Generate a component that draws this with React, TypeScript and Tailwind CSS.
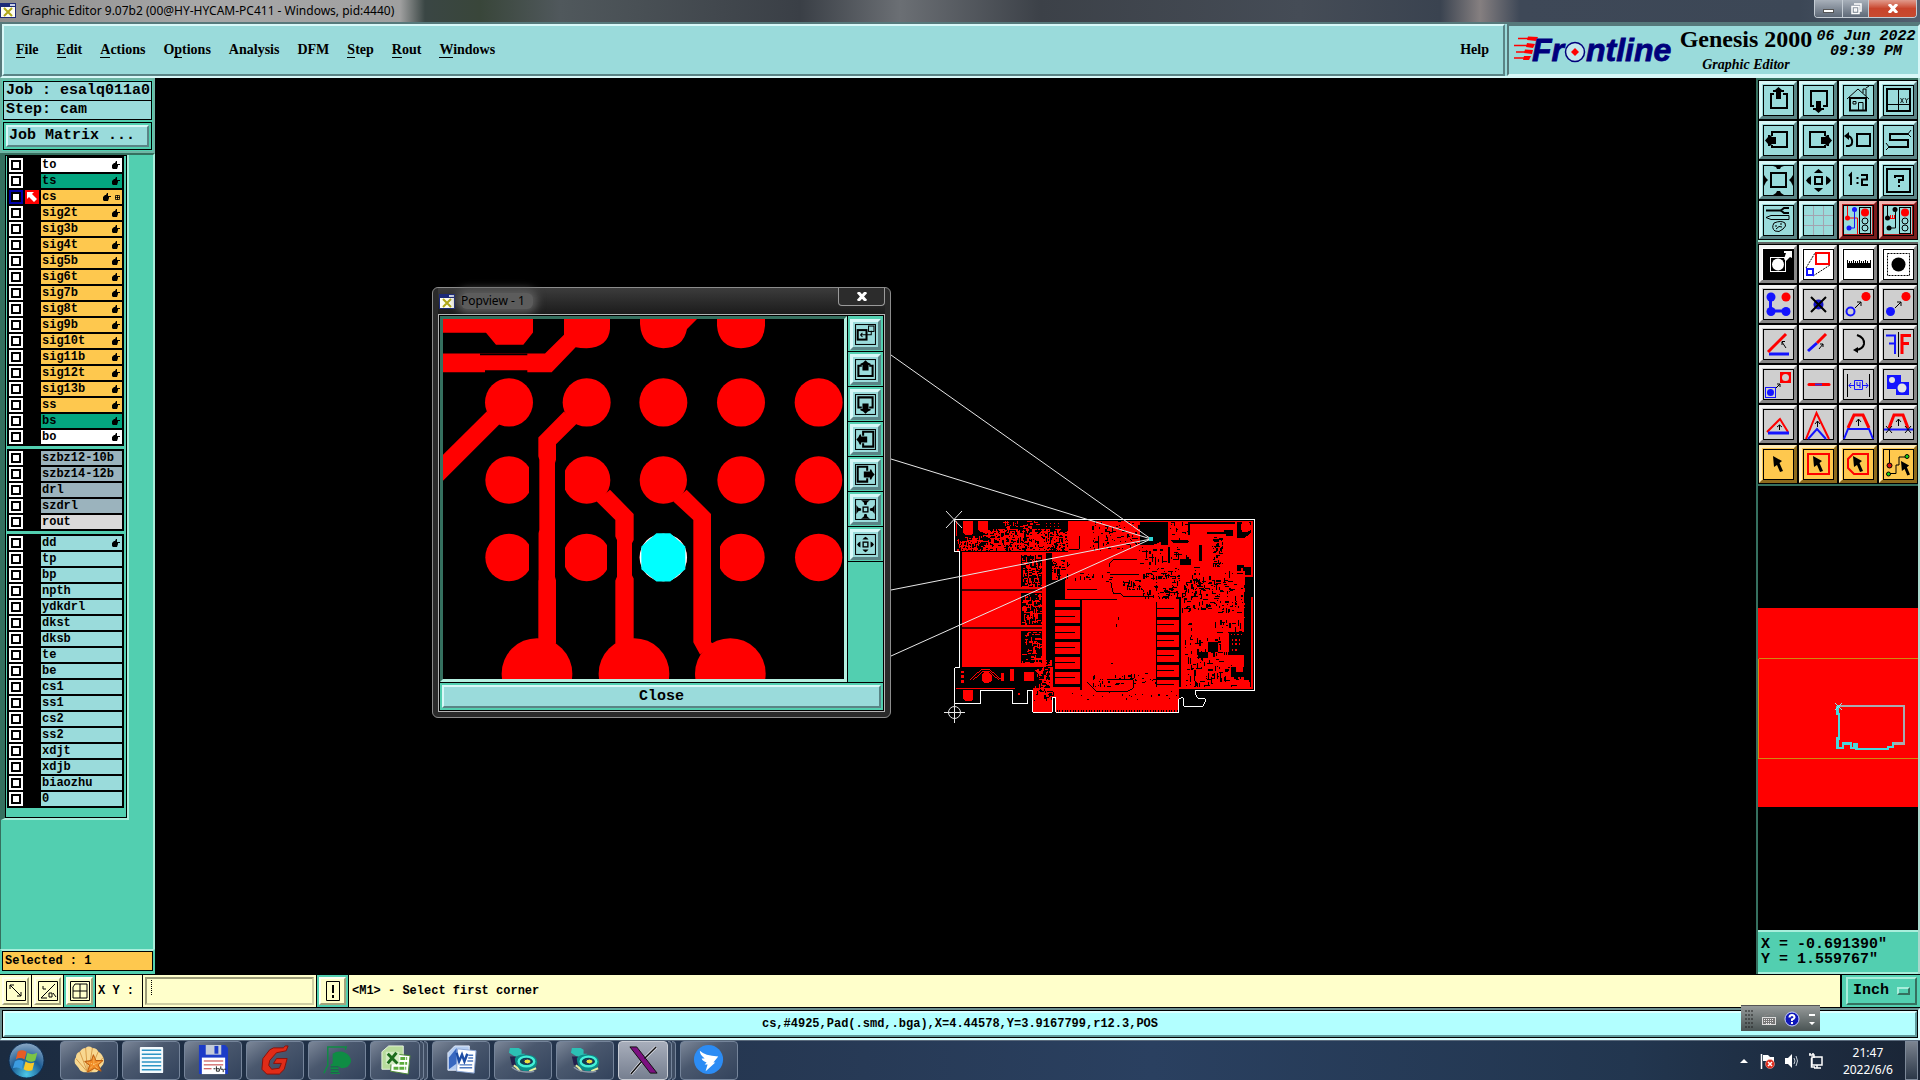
import type { ReactNode } from 'react';
import clsx from 'clsx';

type Layer = { name: string; color: string; hand?: boolean; active?: boolean };

const ORANGE = 'bg-[#fec84e]';
const GREEN = 'bg-[#04a680]';
const STEEL = 'bg-[#9bb3bd]';
const TEAL = 'bg-[#9adbdb]';

const boardLayers: Layer[] = [
  { name: 'to', color: 'bg-white', hand: true },
  { name: 'ts', color: GREEN, hand: true },
  { name: 'cs', color: ORANGE, hand: true, active: true },
  { name: 'sig2t', color: ORANGE, hand: true },
  { name: 'sig3b', color: ORANGE, hand: true },
  { name: 'sig4t', color: ORANGE, hand: true },
  { name: 'sig5b', color: ORANGE, hand: true },
  { name: 'sig6t', color: ORANGE, hand: true },
  { name: 'sig7b', color: ORANGE, hand: true },
  { name: 'sig8t', color: ORANGE, hand: true },
  { name: 'sig9b', color: ORANGE, hand: true },
  { name: 'sig10t', color: ORANGE, hand: true },
  { name: 'sig11b', color: ORANGE, hand: true },
  { name: 'sig12t', color: ORANGE, hand: true },
  { name: 'sig13b', color: ORANGE, hand: true },
  { name: 'ss', color: ORANGE, hand: true },
  { name: 'bs', color: GREEN, hand: true },
  { name: 'bo', color: 'bg-white', hand: true },
];

const drillLayers: Layer[] = [
  { name: 'szbz12-10b', color: STEEL },
  { name: 'szbz14-12b', color: STEEL },
  { name: 'drl', color: STEEL },
  { name: 'szdrl', color: STEEL },
  { name: 'rout', color: 'bg-[#dadada]' },
];

const miscLayers: Layer[] = [
  { name: 'dd', color: TEAL, hand: true },
  ...['tp', 'bp', 'npth', 'ydkdrl', 'dkst', 'dksb', 'te', 'be', 'cs1', 'ss1', 'cs2', 'ss2', 'xdjt', 'xdjb', 'biaozhu', '0'].map(
    (name) => ({ name, color: TEAL }),
  ),
];

const menus: [string, string, string][] = [
  ['', 'F', 'ile'],
  ['', 'E', 'dit'],
  ['', 'A', 'ctions'],
  ['O', 'p', 'tions'],
  ['Analysis', '', ''],
  ['DFM', '', ''],
  ['', 'S', 'tep'],
  ['', 'R', 'out'],
  ['', 'W', 'indows'],
];

const RED = '#ff0000';
const BLUE = '#1414ff';

const mono = "font-['Liberation_Mono',monospace] font-bold";
const serif = "font-['Liberation_Serif',serif] font-bold";

const tealBevel =
  'border-t-[#d8f8f8] border-l-[#d8f8f8] border-b-[#5a8486] border-r-[#5a8486] bg-[#9adbdb]';
const grayBevel =
  'border-t-[#f4f4f4] border-l-[#f4f4f4] border-b-[#878787] border-r-[#878787] bg-[#cfcfcf]';
const whiteBevel =
  'border-t-[#f4f4f4] border-l-[#f4f4f4] border-b-[#878787] border-r-[#878787] bg-white';
const redBevel =
  'border-t-[#f2b4b0] border-l-[#f2b4b0] border-b-[#7c1d1d] border-r-[#7c1d1d] bg-[#9adbdb] ring-2 ring-inset ring-[#b42020]';
const orangeBevel =
  'border-t-[#ffecb8] border-l-[#ffecb8] border-b-[#8d6a1c] border-r-[#8d6a1c] bg-[#fec84e]';
const creamBevel =
  'border-t-[#fffff0] border-l-[#fffff0] border-b-[#a3a37c] border-r-[#a3a37c] bg-[#ffffcb]';

/* ---------- tool icons, drawn on a 31 x 31 grid ---------- */

const arrowUp = 'M15.5 2 L19 5 H21 V7 H18 V14 H13 V7 H10 V5 H12 Z';
const arrowDown = 'M15.5 28 L19 25 H21 V23 H18 V16 H13 V23 H10 V25 H12 Z';
const arrowLeft = 'M2 15.5 L5 12 V10 H7 L9 12 H13 V19 H9 L7 21 H5 V19 Z';
const arrowRight = 'M29 15.5 L26 12 V10 H24 L22 12 H18 V19 H22 L24 21 H26 V19 Z';

const panUp = (
  <>
    <path d="M11 9 H8 V23 H24 V9 H20" fill="none" stroke="#000" strokeWidth="2" />
    <path d={arrowUp} />
  </>
);
const panDown = (
  <>
    <path d="M11 21 H8 V6 H24 V21 H20" fill="none" stroke="#000" strokeWidth="2" />
    <path d={arrowDown} />
  </>
);
const panLeft = (
  <>
    <path d="M9 11 V7 H24 V22 H9 V20" fill="none" stroke="#000" strokeWidth="2" />
    <path d={arrowLeft} />
  </>
);
const panRight = (
  <>
    <path d="M22 11 V7 H7 V22 H22 V20" fill="none" stroke="#000" strokeWidth="2" />
    <path d={arrowRight} />
  </>
);
const zoomIn = (
  <>
    <rect x="8" y="8" width="15" height="14" fill="none" stroke="#000" strokeWidth="2" />
    <path d="M10 1 H21 L18 2 L17 4 H14 L13 2 Z M10 30 H21 L18 28 L17 26 H14 L13 28 Z M1 10 L3 13 L5 15 L3 17 L1 21 Z M30 10 L28 13 L26 15 L28 17 L30 21 Z" />
  </>
);
const zoomOut = (
  <>
    <rect x="12" y="12" width="7" height="7" fill="none" stroke="#000" strokeWidth="2" />
    <path d="M15.5 4 L18 6 L20 8 H11 L13 6 Z M15.5 27 L18 25 L20 23 H11 L13 25 Z M3 15.5 L5 13 L8 11 V20 L5 18 Z M28 15.5 L26 13 L23 11 V20 L26 18 Z" />
  </>
);
const fitIn = (
  <>
    <rect x="12" y="12" width="7" height="7" fill="none" stroke="#000" strokeWidth="2" />
    <path d="M9 2 H22 L18 5 L17 9 H14 L13 5 Z M9 29 H22 L18 26 L17 22 H14 L13 26 Z M2 9 V22 L5 18 L9 17 V14 L5 13 Z M29 9 V22 L26 18 L22 17 V14 L26 13 Z" />
  </>
);
const lightColumn = (
  <>
    <rect x="16.5" y="2.5" width="11" height="26" fill="#9adbdb" stroke="#000" />
    <circle cx="22" cy="7.500" r="4" fill={RED} />
    <circle cx="22" cy="16" r="3" fill="none" stroke="#000" />
    <circle cx="22" cy="23" r="3" fill="none" stroke="#000" />
  </>
);
const pointer = 'M0 0 L9 5 L6.500 7 L10 15 L7 16 L4 9 L1 11 Z';

type Tool = { name: string; bevel: string; icon: ReactNode };

const viewTools: Tool[] = [
  { name: 'Pan up', bevel: tealBevel, icon: panUp },
  { name: 'Pan down', bevel: tealBevel, icon: panDown },
  {
    name: 'Home',
    bevel: tealBevel,
    icon: (
      <g fill="none" stroke="#000">
        <path d="M4 14 L15 4 L26 14 M20 8 V4 H23 V11 M23 3 L26 1" />
        <path d="M7 13 V25.500 H23 V13 Z" strokeWidth="2" />
        <path d="M10 16.500 H13 V19 H10 Z M15.500 25 V17.500 H20 V25" />
      </g>
    ),
  },
  {
    name: 'Window XY',
    bevel: tealBevel,
    icon: (
      <>
        <rect x="4" y="4" width="23" height="22" fill="none" stroke="#000" strokeWidth="2" />
        <path d="M15.500 4 V26 M4 19.500 H27" fill="none" stroke="#000" />
        <path d="M17.500 13 L20.500 18 M20.500 13 L17.500 18 M22 13 L23.500 15.500 L25.500 13 M23.500 15.500 V18" fill="none" stroke="#000" strokeWidth=".8" />
      </>
    ),
  },
  { name: 'Pan left', bevel: tealBevel, icon: panLeft },
  { name: 'Pan right', bevel: tealBevel, icon: panRight },
  {
    name: 'Previous view',
    bevel: tealBevel,
    icon: (
      <>
        <rect x="14" y="9" width="13" height="12" fill="none" stroke="#000" strokeWidth="2" />
        <path d="M3 21 H6 Q10 20 9 15 Q8 11 4 11" fill="none" stroke="#000" strokeWidth="2" />
        <path d="M1 11 L6 7 V15 Z" />
      </>
    ),
  },
  {
    name: 'Serpentine',
    bevel: tealBevel,
    icon: (
      <g fill="none" stroke="#000">
        <path d="M25 9 H7 V15 H25 V22 H6" strokeWidth="2" />
        <path d="M25 9 L28 5 M25 9 L28 12 M6 22 L3 18 M6 22 L3 25" />
      </g>
    ),
  },
  { name: 'Zoom in', bevel: tealBevel, icon: zoomIn },
  { name: 'Zoom out', bevel: tealBevel, icon: zoomOut },
  {
    name: 'Zoom 1:2',
    bevel: tealBevel,
    icon: (
      <path
        d="M6 11 L8 9 V20 M14.500 12 V14 M14.500 17 V19 M18 10 H24 V14.500 H19 V20 H25"
        fill="none"
        stroke="#000"
        strokeWidth="2"
      />
    ),
  },
  {
    name: 'Query',
    bevel: tealBevel,
    icon: (
      <g fill="none" stroke="#000" strokeWidth="2">
        <rect x="4" y="4" width="23" height="23" />
        <path d="M12 13 V11 H20 V15 H16 V18 M16 20 V22" />
      </g>
    ),
  },
  {
    name: 'Setup',
    bevel: tealBevel,
    icon: (
      <g fill="none" stroke="#000">
        <path d="M3 5.500 H19" strokeWidth="2" />
        <path d="M26 3 H21 L18 5.500 L21 8 H26" strokeWidth="2" />
        <path d="M3 12.500 L8 10.500 H26 V14.500 H8 Z" />
        <path d="M11 18 Q18 15 22 18 Q24 21 20 24 Q16 28 12 26 Q8 23 11 18 M12 21 H14 M17 19 H19 M13 24 Q16 20 19 22" />
      </g>
    ),
  },
  {
    name: 'Grid',
    bevel: tealBevel,
    icon: <path d="M10.500 1 V30 M20.500 1 V30 M1 10.500 H30 M1 20.500 H30" fill="none" stroke="#a3a3b0" />,
  },
  {
    name: 'Online check',
    bevel: redBevel,
    icon: (
      <>
        <path d="M4.500 1 V13 M4.500 13 H14.500 V29" fill="none" stroke={RED} />
        <path d="M11.500 5 V23 H6" fill="none" stroke={BLUE} />
        <circle cx="11.500" cy="4.500" r="2.500" fill={BLUE} />
        <circle cx="6" cy="23" r="2.500" fill={BLUE} />
        <circle cx="4.500" cy="13" r="2.500" fill={RED} />
        {lightColumn}
      </>
    ),
  },
  {
    name: 'Net check',
    bevel: redBevel,
    icon: (
      <>
        <path d="M4.500 1 V13 M12.500 5 V23 H6" fill="none" stroke="#000" />
        <circle cx="12" cy="4.500" r="2.500" />
        <circle cx="6" cy="23" r="2.500" />
        <circle cx="4.500" cy="13" r="2.500" />
        <path d="M7 13.500 H12 M7.500 10 V13 M9.500 10 V13 M11.500 10 V13" fill="none" stroke={RED} />
        {lightColumn}
      </>
    ),
  },
];

const editTools: Tool[] = [
  {
    name: 'Select feature',
    bevel: whiteBevel,
    icon: (
      <>
        <rect x="1" y="1" width="29" height="29" />
        <rect x="7.500" y="8.500" width="15" height="14" fill="none" stroke="#fff" />
        <circle cx="15" cy="15.500" r="6" fill="#fff" />
        <path d="M21 10 L23 4 H21 V2 H29 V9 L27 8 L23 12 Z" fill="#fff" />
      </>
    ),
  },
  {
    name: 'Area zoom',
    bevel: whiteBevel,
    icon: (
      <>
        <path d="M3 19 L12 4 M10 27 L27 16" fill="none" stroke="#000" strokeDasharray="2 1" />
        <rect x="13" y="4" width="13" height="11" fill="none" stroke={RED} strokeWidth="2" />
        <rect x="4" y="20" width="6" height="6" fill="none" stroke={BLUE} strokeWidth="2" />
      </>
    ),
  },
  {
    name: 'Measure',
    bevel: whiteBevel,
    icon: (
      <path d="M4 11 H5 V14 H6 V12 H7 V14 H8 V12 H9 V14 H10 V11 H11 V14 H12 V12 H13 V14 H14 V12 H15 V14 H16 V11 H17 V14 H18 V12 H19 V14 H20 V12 H21 V14 H22 V11 H23 V14 H24 V12 H25 V14 H27 V11 H28 V19 H4 Z" />
    ),
  },
  {
    name: 'Reference',
    bevel: whiteBevel,
    icon: (
      <>
        <rect x="4.500" y="4.500" width="22" height="22" fill="none" stroke="#000" strokeDasharray="2 1" />
        <circle cx="15.500" cy="15.500" r="7" />
      </>
    ),
  },
  {
    name: 'Add feature',
    bevel: grayBevel,
    icon: (
      <>
        <path d="M7.500 8 V22 H22" fill="none" stroke={BLUE} strokeWidth="3" />
        <circle cx="8" cy="8" r="4.500" fill={BLUE} />
        <circle cx="8" cy="22.500" r="4.500" fill={BLUE} />
        <circle cx="23" cy="22.500" r="4.500" fill={BLUE} />
        <circle cx="23" cy="8" r="4.500" fill={RED} />
      </>
    ),
  },
  {
    name: 'Delete',
    bevel: grayBevel,
    icon: (
      <>
        <circle cx="15.500" cy="15.500" r="5" fill="#1414c8" />
        <path d="M8 8 L23 23 M23 8 L8 23" fill="none" stroke="#000" strokeWidth="2" />
      </>
    ),
  },
  {
    name: 'Move',
    bevel: grayBevel,
    icon: (
      <>
        <circle cx="7.500" cy="22.500" r="4" fill="none" stroke={BLUE} strokeWidth="2" />
        <circle cx="23" cy="7.500" r="4.500" fill={RED} />
        <path d="M12 19 L18 13 M14 13 H18 V17" fill="none" stroke="#000" />
      </>
    ),
  },
  {
    name: 'Copy',
    bevel: grayBevel,
    icon: (
      <>
        <circle cx="7.500" cy="22.500" r="4.500" fill={BLUE} />
        <circle cx="23" cy="7.500" r="4.500" fill={RED} />
        <path d="M12 19 L18 13 M14 13 H18 V17" fill="none" stroke="#000" />
      </>
    ),
  },
  {
    name: 'Rotate line',
    bevel: grayBevel,
    icon: (
      <>
        <path d="M6 25 H26" fill="none" stroke={BLUE} strokeWidth="3" />
        <path d="M5 23 L23 5" fill="none" stroke={RED} strokeWidth="3" />
        <path d="M23 19 L19 13 M19 16 V12.500 H22" fill="none" stroke="#000" />
      </>
    ),
  },
  {
    name: 'Extend line',
    bevel: grayBevel,
    icon: (
      <>
        <path d="M5 22 L14 14" fill="none" stroke={BLUE} strokeWidth="3" />
        <path d="M14 14 L23 5" fill="none" stroke={RED} strokeWidth="3" />
        <path d="M16 20 L20 15 M17 15 H20 V18" fill="none" stroke="#000" />
      </>
    ),
  },
  {
    name: 'Rotate',
    bevel: grayBevel,
    icon: (
      <>
        <path d="M14 6 Q22 9 21 15 Q20 20 13 21" fill="none" stroke="#000" strokeWidth="2" />
        <path d="M10 21 L15 18 V24 Z" />
      </>
    ),
  },
  {
    name: 'Mirror',
    bevel: grayBevel,
    icon: (
      <>
        <path d="M15.500 3 V28" stroke="#000" />
        <path d="M3 6.500 H12 V25 M6 14.500 H12" fill="none" stroke={BLUE} strokeWidth="2" />
        <path d="M28 6.500 H19 V25 M26 14.500 H19" fill="none" stroke={RED} strokeWidth="3" />
      </>
    ),
  },
  {
    name: 'Resize pad',
    bevel: grayBevel,
    icon: (
      <>
        <rect x="2.500" y="18.500" width="10" height="10" fill="none" stroke={BLUE} />
        <circle cx="7.500" cy="23.500" r="3.500" fill={BLUE} />
        <rect x="17" y="3" width="11" height="11" fill={RED} />
        <circle cx="22.500" cy="8.500" r="3.500" fill="#cfcfcf" />
        <path d="M13 19 L17 15 M14 15 H17 V18" fill="none" stroke="#000" />
      </>
    ),
  },
  {
    name: 'Join',
    bevel: grayBevel,
    icon: (
      <>
        <path d="M6 15.500 H26" stroke={RED} strokeWidth="3" strokeLinecap="round" />
        <path d="M12 15.500 H19" stroke="#3232e0" strokeWidth="2" />
      </>
    ),
  },
  {
    name: 'Spacing',
    bevel: grayBevel,
    icon: (
      <>
        <path d="M4.500 5 V28 M26.500 5 V28" stroke="#000" />
        <path
          d="M6 16.500 H11 M8 14 L6 16.500 L8 19 M20 16.500 H25 M23 14 L25 16.500 L23 19 M11.500 11.500 H19.500 V20.500 H11.500 Z M14 13 V16.500 H17 M17 13 V19"
          fill="none"
          stroke={BLUE}
        />
      </>
    ),
  },
  {
    name: 'Merge',
    bevel: grayBevel,
    icon: (
      <>
        <path d="M4 6 H18 V13 H26 V26 H13 V20 H4 Z" fill={BLUE} />
        <circle cx="9" cy="11" r="3" fill="#e4e4e4" />
        <circle cx="19" cy="19" r="4.500" fill="#e4e4e4" />
      </>
    ),
  },
  {
    name: 'Chamfer',
    bevel: grayBevel,
    icon: (
      <>
        <path d="M4 23 L17 10 L25 23" fill="none" stroke={RED} strokeWidth="2" />
        <path d="M5 24 H26" stroke={BLUE} strokeWidth="3" />
        <path d="M16.500 21 V16 M14 18 L16.500 16 L19 18" fill="none" stroke="#000" />
      </>
    ),
  },
  {
    name: 'Stretch',
    bevel: grayBevel,
    icon: (
      <>
        <path d="M3 30 L13.500 4 L26 30" fill="none" stroke={RED} strokeWidth="2" />
        <path d="M5 30 L14 20 L23 30" fill="none" stroke={BLUE} strokeWidth="2" />
        <path d="M14.500 18 V12 M12 15 L14.500 12 L17 15" fill="none" stroke="#000" />
      </>
    ),
  },
  {
    name: 'Trapezoid',
    bevel: grayBevel,
    icon: (
      <>
        <path d="M5 19 L11 6 H20 L26 19" fill="none" stroke={RED} strokeWidth="3" />
        <path d="M1 30 L5 20 H26 L30 30" fill="none" stroke={BLUE} strokeWidth="2" />
        <path d="M15.500 17 V10 M13 13 L15.500 10 L18 13" fill="none" stroke="#000" />
      </>
    ),
  },
  {
    name: 'Trim',
    bevel: grayBevel,
    icon: (
      <>
        <path d="M6 19 L11 6 H20 L25 19" fill="none" stroke={RED} strokeWidth="3" />
        <path d="M1 20.500 H30" stroke={BLUE} strokeWidth="2" />
        <path d="M15.500 17 V10 M13 13 L15.500 10 L18 13 M3 17 L9 24 M9 17 L3 24 M22 17 L28 24 M28 17 L22 24" fill="none" stroke="#000" />
      </>
    ),
  },
  { name: 'Select', bevel: orangeBevel, icon: <path d={pointer} transform="translate(10 7)" /> },
  {
    name: 'Select rectangle',
    bevel: orangeBevel,
    icon: (
      <>
        <rect x="5" y="5" width="21" height="20" fill="none" stroke={RED} strokeWidth="2" />
        <path d={pointer} transform="translate(10 7)" />
      </>
    ),
  },
  {
    name: 'Select polygon',
    bevel: orangeBevel,
    icon: (
      <>
        <path d="M10 5 H25 V25 H11 L5 19 V10 Z" fill="none" stroke={RED} strokeWidth="2" />
        <path d={pointer} transform="translate(10 7)" />
      </>
    ),
  },
  {
    name: 'Select net',
    bevel: orangeBevel,
    icon: (
      <>
        <path d="M6.500 1 V16 M5 24.500 H13 V16 H16 V8 H24" fill="none" stroke="#000" />
        <circle cx="6.500" cy="16.500" r="2.500" fill="#d01010" stroke="#000" />
        <circle cx="5.500" cy="25" r="2" fill="#18d018" stroke="#000" />
        <circle cx="24" cy="7.500" r="2" fill="#18d018" stroke="#000" />
        <path d={pointer} transform="translate(18 12) scale(.9)" />
      </>
    ),
  },
];

const popTools: { name: string; icon: ReactNode }[] = [
  {
    name: 'Link view',
    icon: (
      <>
        <rect x="4" y="9" width="13" height="14" fill="none" stroke="#000" strokeWidth="3" />
        <rect x="20" y="3" width="8" height="8" fill="none" stroke="#000" strokeWidth="1.500" />
        <path d="M8 16 H24 V10 M8 16 L11 13 M8 16 L11 19" fill="none" stroke="#000" strokeWidth="1.500" />
      </>
    ),
  },
  {
    name: 'Pan up',
    icon: (
      <>
        <path d="M10 10 H5 V25 H26 V10 H21" fill="none" stroke="#000" strokeWidth="3" />
        <path d="M15.500 2 L19 5 L23 7 V9 H20 V17 H11 V9 H8 V7 L12 5 Z" />
      </>
    ),
  },
  {
    name: 'Pan down',
    icon: (
      <>
        <path d="M10 20 H5 V5 H26 V20 H21" fill="none" stroke="#000" strokeWidth="3" />
        <path d="M15.500 29 L19 26 L23 24 V22 H20 V14 H11 V22 H8 V24 L12 26 Z" />
      </>
    ),
  },
  {
    name: 'Pan left',
    icon: (
      <>
        <path d="M12 10 V4 H27 V26 H12 V21" fill="none" stroke="#000" strokeWidth="3" />
        <path d="M2 15.500 L5 12 L7 8 H9 V11 H18 V20 H9 V23 H7 L5 19 Z" />
      </>
    ),
  },
  {
    name: 'Pan right',
    icon: (
      <>
        <path d="M18 10 V4 H4 V26 H18 V21" fill="none" stroke="#000" strokeWidth="3" />
        <path d="M29 15.500 L26 12 L24 8 H22 V11 H13 V20 H22 V23 H24 L26 19 Z" />
      </>
    ),
  },
  { name: 'Fit', icon: fitIn },
  { name: 'Zoom out', icon: zoomOut },
];

function ToolButton({ tool }: { tool: Tool }) {
  return (
    <button
      type="button"
      aria-label={tool.name}
      className={clsx('flex size-[38px] items-center justify-center border-[3px]', tool.bevel)}
    >
      <svg viewBox="0 0 31 31" className="size-[31px]">
        <rect x=".5" y=".5" width="30" height="30" fill="none" stroke="#000" />
        {tool.icon}
      </svg>
    </button>
  );
}

function ToolGrid({ tools, className }: { tools: Tool[]; className?: string }) {
  return (
    <div className={clsx('border-t-2 bg-black p-px', className)}>
      <div className="grid grid-cols-[repeat(4,38px)] gap-[2px]">
        {tools.map((tool) => (
          <ToolButton key={tool.name} tool={tool} />
        ))}
      </div>
    </div>
  );
}

function HandIcon() {
  return (
    <svg viewBox="0 0 8 8" className="size-2">
      <path d="M0 4 L2 2 L3 2 L4 0 H5 V3 H8 V4 H6 V5 L5 8 H1 L0 7 Z" />
    </svg>
  );
}

function XWindowIcon() {
  return (
    <svg viewBox="0 0 16 15" className="h-[15px] w-4 shrink-0">
      <rect width="16" height="15" fill="#1c2a78" />
      <rect x="10" y="1" width="5" height="2" fill="#c8d0e8" />
      <rect x="1" y="4" width="14" height="10" fill="#fdfdf0" />
      <path d="M4 5 L12 13 M12 5 L4 13" stroke="#b0a818" strokeWidth="2" />
    </svg>
  );
}

function LayerRow({ layer }: { layer: Layer }) {
  return (
    <label className="flex h-[14px]">
      <span className={clsx('flex size-[14px] p-[2px]', layer.active ? 'bg-[#0000a8]' : 'bg-white')}>
        <input
          type="checkbox"
          defaultChecked={layer.active}
          className="size-[10px] appearance-none border-2 border-black bg-white"
        />
      </span>
      <span className="flex w-[18px] justify-end pr-[2px]">
        {layer.active && (
          <svg viewBox="0 0 14 14" className="size-[14px]">
            <rect width="14" height="14" fill={RED} />
            <path d="M2 2 H9 L7 4 L12 9 L9 12 L4 7 L2 9 Z" fill="#fff" />
          </svg>
        )}
      </span>
      <span className={clsx('flex flex-1 items-center gap-1 pr-[2px] pl-px', layer.color)}>
        <span className={clsx(mono, 'flex-1 text-[12px] leading-[14px]')}>{layer.name}</span>
        {layer.hand && <HandIcon />}
        {layer.active && (
          <svg viewBox="0 0 5 5" className="size-[5px]">
            <path d="M.5 .5 H4.500 V4.500 H.5 Z M2.500 0 V5 M0 2.500 H5" fill="none" stroke="#000" strokeWidth=".8" />
          </svg>
        )}
      </span>
    </label>
  );
}

function LayerGroup({ layers }: { layers: Layer[] }) {
  return (
    <div className="flex flex-col gap-[2px] bg-black p-[2px]">
      {layers.map((layer) => (
        <LayerRow key={layer.name} layer={layer} />
      ))}
    </div>
  );
}

function LayerSidebar() {
  return (
    <aside className="flex w-[155px] shrink-0 flex-col bg-[#52cfb0] pb-px">
      <div className="border-2 border-[#6fb5a4] p-px">
        <div className={clsx(mono, 'border border-black bg-[#9adbdb] pl-[2px] text-[15px] leading-[18px] whitespace-nowrap')}>
          Job : esalq011a0
        </div>
        <div className={clsx(mono, 'border border-t-0 border-black bg-[#9adbdb] pl-[2px] text-[15px] leading-[18px]')}>
          Step: cam
        </div>
        <div className="mt-[2px] border border-black p-[2px]">
          <button type="button" className={clsx(mono, tealBevel, 'block w-full border-2 pl-px text-left text-[15px] leading-[18px]')}>
            Job Matrix ...
          </button>
        </div>
      </div>
      <div className="flex-1 border-t-2 border-r-2 border-l border-t-[#35705f] border-r-[#a8eedb] border-l-[#35705f] pr-6">
        <div className="border-r-2 border-b-2 border-l-4 border-r-[#a8eedb] border-b-[#a8eedb] border-l-[#35705f]">
          <div className="flex flex-col gap-[3px] border border-black pr-[2px] pb-[9px] pl-px">
            <LayerGroup layers={boardLayers} />
            <LayerGroup layers={drillLayers} />
            <LayerGroup layers={miscLayers} />
          </div>
        </div>
      </div>
      <div className="border-2 border-t-[#a8eedb] border-r-[#52cfb0] border-b-[#52cfb0] border-l-[#52cfb0]">
        <div className={clsx(mono, 'border border-black bg-[#fec84e] pl-[2px] text-[12px] leading-[18px]')}>
          Selected : 1
        </div>
      </div>
    </aside>
  );
}

/* ---------- board drawing ---------- */

// fixed-seed scatter, so that the copper looks the same on every paint
function scatter(x: number, y: number, w: number, h: number, count: number, max: number, seed: number) {
  let s = seed;
  const next = () => {
    s = (s * 1103515245 + 12345) % 2147483648;
    return s / 2147483648;
  };
  let d = '';
  for (let i = 0; i < count; i++) {
    const px = x + Math.floor((next() * w) / 3) * 3;
    const py = y + Math.floor((next() * h) / 3) * 3;
    const long = 3 + Math.floor((next() * max) / 3) * 3;
    const flat = next() > 0.5;
    const thick = next() > 0.85 ? 6 : 3;
    const cw = Math.min(flat ? long : thick, x + w - px);
    const ch = Math.min(flat ? thick : long, y + h - py);
    d += `M${px} ${py}h${cw}v${ch}h${-cw}z`;
  }
  return d;
}

const outline =
  'M44 58 H944 V571 H768 V585 L775 597 H796 V605 L788 619 H732 V600 L727 592 L716 597 V637 H347 V592 H337 V637 H279 V573 H262 V612 H218 V571 H122 V612 H44 V503 H59 V155 H44 Z';

const slots = [322, 348, 370, 395, 417, 440, 462, 485, 507, 530, 551];

function Board() {
  return (
    <g transform="translate(785 422) scale(.33333)" shapeRendering="crispEdges">
      <path d="M65 62 H940 V568 H716 V637 H347 V592 H337 V637 H279 V568 H48 V500 H65 Z" fill={RED} />

      {/* connector strip, top left */}
      <path d="M50 64 H385 V155 H50 Z" />
      <path d="M70 64 h30 v34 l-6 8 h-18 l-6 -6z M115 64 h28 v26 l-6 6 h-16 l-6 -6z M48 64 h4 v45 h-4z" fill={RED} />
      <path d={scatter(190, 64, 110, 24, 30, 15, 6)} fill={RED} />
      <path d={scatter(130, 88, 255, 66, 520, 18, 7)} fill={RED} />
      <path d={scatter(50, 108, 80, 45, 75, 15, 11)} fill={RED} />
      <path d="M316 64 h68 v22 h-68z" />
      <path d="M318 68 h4v4h-4z M330 68 h4v4h-4z M342 68 h4v4h-4z M354 68 h4v4h-4z M318 78 h4v4h-4z M330 78 h4v4h-4z M342 78 h4v4h-4z M354 78 h4v4h-4z" fill={RED} />

      {/* driver columns between planes */}
      <path d="M244 165 H306 V262 H244 Z M244 280 H306 V376 H244 Z M244 394 H306 V490 H244 Z M318 160 H336 V500 H318 Z M336 240 H376 V300 H345 V500 H330 Z" />
      <path d={scatter(246, 166, 62, 94, 90, 18, 3)} fill={RED} />
      <path d={scatter(246, 282, 62, 92, 90, 18, 5)} fill={RED} />
      <path d={scatter(246, 396, 62, 92, 90, 18, 9)} fill={RED} />
      <path d={scatter(320, 165, 70, 90, 45, 15, 13)} />
      <path d="M66 267 H306 V272 H66 Z M66 381 H306 V386 H66 Z" fill="#4a0000" />

      {/* bottom left */}
      <path d="M48 500 H330 V563 H48 Z M225 563 H279 V571 H225 Z" />
      <path d="M90 540 L122 510 H150 L185 540 M100 540 L128 514 H148 L176 540" fill="none" stroke={RED} strokeWidth="3" />
      <path d="M132 517 h14 l10 8 v16 l-10 8 h-12 l-9 -8 v-16z M182 520 h10 v24 h-10z M210 506 h12 v38 h-12z M252 516 h30 v26 h-30z M64 512 h8v8h-8z M64 526 h8v8h-8z M64 540 h8v8h-8z M68 570 h32 v28 l-8 6 h-14 l-10 -8z M234 578 h7 v7 h-7z" fill={RED} />
      <path d={scatter(285, 480, 60, 90, 80, 15, 17)} fill={RED} />
      <path d={scatter(282, 566, 60, 36, 22, 12, 19)} />

      {/* centre top traces */}
      <path d="M388 148 H418 V108 M476 108 V150 M508 200 V190 L518 180 H592 M510 225 H596 M512 245 L520 280 H540 L550 290 H640 M380 270 H470 M376 300 H530" fill="none" stroke="#000" strokeWidth="3" />
      <path d={scatter(450, 64, 150, 90, 75, 12, 23)} />
      <path d={scatter(390, 215, 130, 30, 16, 12, 29)} />
      <path d={scatter(550, 240, 60, 30, 30, 18, 31)} />

      {/* finger slots around the big package */}
      <path d="M330 300 H346 V480 H330 Z M338 300 H346 V560 H338 Z M420 300 H425 V570 H420 Z M648 305 H652 V560 H648 Z M716 290 H722 V560 H716 Z" />
      {slots.map((y, i) => (
        <path key={y} d={`M345 ${y}h${i % 2 ? 60 : 76}v${i % 2 ? 3 : 9}h${i % 2 ? -60 : -76}z M652 ${y + 2}h${i % 2 ? 66 : 50}v${i % 2 ? 9 : 3}h${i % 2 ? -66 : -50}z`} />
      ))}
      <path d="M534 352 h4 v8 h-4z M528 372 h4 v10 h-4z M514 488 h6 v4 h-6z" />
      <path d="M440 545 L470 575 H560 L580 565 V540 H500" fill="none" stroke="#000" strokeWidth="3" />
      <path d={scatter(460, 520, 190, 40, 40, 12, 37)} />

      {/* right half */}
      <path d="M600 66 H684 V80 H664 V125 L640 135 H600 Z M664 80 H684 V136 H664 Z M690 120 H744 V130 H700 Z M750 66 H885 V72 H750 Z M800 96 H875 V102 H800 Z M850 90 H880 V108 H860 Z M745 66 h4 v40 h-4z M888 66 H932 V100 L912 115 V200 L890 205 V66 Z M890 200 H932 V226 H912 V250 H890 Z M915 230 H940 V290 H932 V560 H912 V260 Z M776 136 h10 v46 h-10z M684 140 h5 v50 h-5z M720 176 h34 v18 h-34z" />
      <path d="M905 66 H926 L932 76 V90 L922 96 H908 L903 88 Z" fill={RED} />
      <path d={scatter(600, 140, 150, 56, 34, 24, 41)} />
      <path d={scatter(610, 204, 110, 94, 120, 15, 42)} />
      <path d={scatter(750, 200, 130, 70, 45, 18, 43)} />
      <path d={scatter(725, 240, 185, 100, 120, 15, 47)} />
      <path d={scatter(735, 360, 170, 200, 170, 18, 53)} />
      <path d={scatter(690, 66, 60, 60, 18, 15, 59)} />
      <path d={scatter(815, 110, 36, 90, 75, 9, 61)} />
      <path d="M865 396 h48 v70 h-48z M805 425 h28 v30 h-28z M775 455 h30 v20 h-30z M872 500 h40 v30 h-40z" />
      <path d="M872 402 h4v4h-4z M882 402 h4v4h-4z M892 402 h4v4h-4z M902 402 h4v4h-4z M876 416 h4v6h-4z M886 416 h4v6h-4z M896 416 h4v6h-4z M876 430 h4v6h-4z M886 430 h4v6h-4z M896 430 h4v6h-4z M876 446 h4v6h-4z M886 446 h4v6h-4z" fill={RED} />
      <path d={scatter(880, 205, 34, 150, 60, 15, 71)} fill={RED} />
      <path d="M755 345 h70 v70 h-70z M610 236 h24 l6 8 v18 l-6 8 h-24 l-6 -8 v-18z M655 236 h42 v28 h-42z M850 115 h62 v80 h-62z M842 400 h26 v55 h-26z M905 540 h20 l6 8 v16 h-30 v-16z M820 200 h24 l6 8 v18 l-6 8 h-24 l-6 -8 v-18z M888 482 h22 v34 h-22z M890 222 h24 v34 h-24z" fill={RED} />
      <path d={scatter(395, 572, 320, 32, 22, 6, 73)} />
      <path d="M350 633 H714" stroke="#000" strokeWidth="6" strokeDasharray="3 5" />

      <path d={outline} fill="none" stroke="#fff" strokeWidth="3" />
    </g>
  );
}

function Canvas() {
  return (
    <svg className="absolute inset-0 h-full w-full" aria-label="Board view">
      <Board />
      <g fill="none" stroke="#e8e8e8">
        <path d="M736 277 L996 461 L736 381 M736 512 L996 461 L736 578" />
        <path d="M791 433 L807 450 M807 433 L791 450" />
        <circle cx="799.500" cy="634.500" r="6" />
        <path d="M799.500 624 V645 M789 634.500 H810" />
      </g>
      <path d="M994 459 h4 v4 h-4z" fill="#30d8d8" />
    </svg>
  );
}

const padColumns = [237, 470, 700, 933, 1166];

function CopperDetail() {
  return (
    <svg viewBox="39 120 1203 1075" preserveAspectRatio="none" className="h-full w-full bg-black">
      <g fill={RED}>
        <path d="M39 120 H309 V160 L280 197 H198 L168 161 H39 Z" />
        <path d="M39 223 H345 L402 167 V120 H540 V150 Q535 205 470 207 Q450 207 437 204 L365 279 H292 V273 H165 V279 H39 Z" />
        <path d="M292 223 V228 H150 V223 Z" fill="#000" />
        <path d="M630 120 H801 L771 150 Q760 207 700 207 Q635 205 630 135 Z M861 120 H1005 V140 Q1000 207 933 207 Q866 205 861 140 Z" />
        {padColumns.map((x) => (
          <g key={x}>
            <circle cx={x} cy="369" r="72" />
            <circle cx={x} cy="601" r="71" />
            <circle cx={x} cy="832" r="71" />
          </g>
        ))}
        <path d="M39 525 L170 396 L210 433 L39 603 Z" />
        <path d="M402 396 L325 474 V530 L328 540 V750 L325 760 V1090 H378 V900 L375 890 V550 L378 540 V494 L440 433 Z" />
        <path d="M540 630 L611 702 V780 L606 790 V885 L611 895 V1090 H556 V900 L561 890 V780 L556 770 V720 L500 665 Z M770 630 L843 702 V1085 L850 1090 L810 1122 L790 1085 V720 L730 665 Z" />
        <circle cx="321" cy="1179" r="106" />
        <circle cx="612" cy="1179" r="106" />
        <circle cx="901" cy="1179" r="106" />
      </g>
      <path d="M297 540 H325 V900 H297 Z M378 540 H405 V900 H378 Z M531 770 H556 V900 H531 Z M843 770 H870 V900 H843 Z" fill="#000" />
      <circle cx="700" cy="832" r="71" fill="#fff" />
      <path d="M680 762 H720 L764 800 V866 L720 902 H680 L636 866 V800 Z" fill="#0ff" stroke="#0ff" strokeWidth="4" />
    </svg>
  );
}

function PopView() {
  return (
    <section
      aria-label="Popview - 1"
      className="absolute top-[209px] left-[277px] flex h-[431px] w-[459px] flex-col rounded-md border border-[#8c8c8c] bg-[#2a2a2a] px-[5px] pb-[5px]"
    >
      <header className="flex h-[26px] items-start bg-linear-to-b from-[#3c3c3c] to-[#1c1c1c]">
        <div className="mt-[5px] flex items-center gap-[6px] pl-px">
          <XWindowIcon />
          <h2 className="rounded-md bg-[#5c5c5c] pr-2 font-['Noto_Sans',sans-serif] text-[12px] leading-[16px] text-black shadow-[0_0_8px_4px_#5c5c5c]">
            Popview - 1
          </h2>
        </div>
        <button
          type="button"
          aria-label="Close window"
          className="ml-auto flex h-[18px] w-[47px] items-center justify-center rounded-b border border-t-0 border-[#9a9a9a] bg-[#2c2c2c]"
        >
          <svg viewBox="0 0 10 9" className="h-[9px] w-[10px]">
            <path d="M1 0 L9 9 M9 0 L1 9" stroke="#fff" strokeWidth="3" />
          </svg>
        </button>
      </header>
      <div className="flex min-h-0 flex-1 flex-col gap-px border border-[#b4b4b4] bg-black p-px">
        <div className="flex min-h-0 flex-1 gap-px">
          <div className="min-w-0 flex-1 border-[3px] border-t-[#35705f] border-r-[#b4f0e0] border-b-[#b4f0e0] border-l-[#35705f]">
            <CopperDetail />
          </div>
          <div className="flex w-[35px] flex-col gap-px bg-[#52cfb0] pt-[2px]">
            {popTools.map((tool) => (
              <div key={tool.name} className="flex h-[34px] items-center justify-center border-b border-black">
                <button
                  type="button"
                  aria-label={tool.name}
                  className={clsx('flex size-[31px] items-center justify-center border-[3px]', tealBevel)}
                >
                  <svg viewBox="0 0 31 31" className="size-[21px]">
                    <rect x=".8" y=".8" width="29.400" height="29.400" fill="none" stroke="#000" strokeWidth="1.500" />
                    {tool.icon}
                  </svg>
                </button>
              </div>
            ))}
          </div>
        </div>
        <div className="bg-[#52cfb0] p-[2px]">
          <button type="button" className={clsx(mono, tealBevel, 'block w-full border-2 pt-px text-[15px] leading-[18px]')}>
            Close
          </button>
        </div>
      </div>
    </section>
  );
}

function Overview() {
  return (
    <svg className="h-full w-full" aria-label="Overview">
      <g transform="translate(-18 104) scale(.33333)" fill="none" shapeRendering="crispEdges">
        <rect x="54" y="53" width="900" height="598" fill={RED} />
        <path d="M900 206 H56 V506 H900" stroke="#d08a10" strokeWidth="3" />
        <path
          d="M295 348 H492 V461 H460 V471 H444 V477 H350 V464 H342 V474 H334 V461 H310 V474 H293 V446 H297 V372 H293 V348"
          stroke="#48d8dc"
          strokeWidth="7"
        />
        <path d="M300 348 H492 V461 H462" stroke="#a8acb0" strokeWidth="7" />
        <path d="M286 340 L305 360 M305 340 L286 360" stroke="#8ce8e8" strokeWidth="3" />
      </g>
    </svg>
  );
}

function ToolSidebar() {
  return (
    <aside className="flex w-[164px] shrink-0 flex-col border-r-2 border-l-2 border-r-[#a8d8cc] border-l-[#35705f] bg-black">
      <ToolGrid tools={viewTools} className="border-b-2 border-t-[#35705f] border-b-[#a8eedb]" />
      <ToolGrid tools={editTools} className="border-t-[#606060] border-b-2 border-b-[#35705f]" />
      <div className="min-h-0 flex-1">
        <Overview />
      </div>
      <dl
        className={clsx(
          mono,
          'grid grid-cols-[27px_1fr] border-t-2 border-b-2 border-t-[#a8eedb] border-b-[#a8eedb] bg-[#52cfb0] pt-[5px] pb-[5px] pl-[3px] text-[15px] leading-[15px]',
        )}
      >
        <dt className="whitespace-pre">X =</dt>
        <dd className="pl-[9px]">-0.691390&quot;</dd>
        <dt className="whitespace-pre">Y =</dt>
        <dd className="pl-[9px]">1.559767&quot;</dd>
      </dl>
    </aside>
  );
}

function TitleBar() {
  return (
    <header className="flex h-[22px] items-start bg-[linear-gradient(90deg,#8d8d8d_0,#a8a8a8_200px,#a0a0a0_400px,#3a4644_425px,#39463a_480px,#50585c_560px,#3a3f46_800px,#6b6f74_900px,#3c4148_1040px,#454c56_1300px,#3a4350_1440px,#857f80_1480px,#3e4857_1520px,#3c4756_1800px,#536070_1920px)]">
      <div className="flex h-[21px] items-center gap-[5px]">
        <XWindowIcon />
        <h1 className="font-['Noto_Sans',sans-serif] text-[12px] text-black">
          Graphic Editor 9.07b2 (00@HY-HYCAM-PC411 - Windows, pid:4440)
        </h1>
      </div>
      <div className="mr-[3px] ml-auto flex h-[18px] overflow-hidden rounded-b border border-t-0 border-[#c4ccd4]">
        <button type="button" aria-label="Minimize" className="flex w-[28px] items-end justify-center border-r border-[#c4ccd4] bg-linear-to-b from-[#a8b0ba] to-[#5f6a78] pb-[4px]">
          <span className="h-[4px] w-[11px] border border-[#555] bg-white" />
        </button>
        <button type="button" aria-label="Restore" className="flex w-[26px] items-center justify-center border-r border-[#c4ccd4] bg-linear-to-b from-[#a8b0ba] to-[#5f6a78]">
          <svg viewBox="0 0 12 12" className="size-3">
            <path d="M4 1 H11 V8 H9 M2 3.500 H9 V10.500 H2 Z M4.500 6 H6.500 V8 H4.500 Z" fill="none" stroke="#fff" strokeWidth="1.500" />
          </svg>
        </button>
        <button type="button" aria-label="Close" className="flex w-[47px] items-center justify-center bg-linear-to-b from-[#e09a8c] via-[#c8442c] to-[#c84a30]">
          <svg viewBox="0 0 10 9" className="h-[9px] w-[10px]">
            <path d="M1 0 L9 9 M9 0 L1 9" stroke="#fff" strokeWidth="3" />
          </svg>
        </button>
      </div>
    </header>
  );
}

function FrontlineLogo() {
  return (
    <svg viewBox="0 -8 164 50" className="h-[50px] w-[164px] overflow-visible" role="img" aria-label="Frontline">
      <path
        d="M4 3.500 H16 M0 10.500 H15 M2 17 H13 M0 23 H12"
        fill="none"
        stroke={RED}
        strokeWidth="1.500"
      />
      <path d="M14 1.500 L24 2 L22 6 L13 5 Z M13 8 L21 9 L19 13 L12 12 Z M11 14.500 L19 15 L18 19 L10 18 Z M10 21 L17 21 L15 25 L9 25 Z" fill={RED} />
      <g
        className="font-['Liberation_Sans',sans-serif] text-[32px] font-bold italic"
        fill="#00007c"
        stroke="#00007c"
        strokeWidth=".8"
      >
        <text x="18" y="26">Fr</text>
        <text x="72" y="26">ntline</text>
      </g>
      <circle cx="61" cy="17" r="9.500" fill="#c4e8ec" stroke="#00007c" strokeWidth="1.500" />
      <path d="M61 13 L65 17 L61 21 L57 17 Z" fill={RED} />
    </svg>
  );
}

function MenuBar() {
  return (
    <div className="flex h-14 border-t-2 border-b-2 border-l-2 border-t-[#56797b] border-b-[#d8f8f8] border-l-[#56797b] bg-[#9adbdb]">
      <nav className={clsx(serif, tealBevel, 'flex flex-1 items-center gap-[18px] border-2 pr-[14px] pl-3 text-[14px]')}>
        {menus.map(([before, key, after]) => (
          <button key={before + key + after} type="button" className="leading-[18px]">
            {before}
            <span className={clsx(key && 'border-b border-black')}>{key}</span>
            {after}
          </button>
        ))}
        <button type="button" className="ml-auto leading-[18px]">Help</button>
      </nav>
      <div className="ml-[2px] flex w-[413px] items-start border-2 border-t-[#56797b] border-r-[#d8f8f8] border-b-[#d8f8f8] border-l-[#56797b] pt-px pl-[5px]">
        <FrontlineLogo />
        <div className={clsx(serif, 'w-[136px] text-center whitespace-nowrap')}>
          <div className="text-[24px] leading-[24px]">Genesis 2000</div>
          <div className="pt-[4px] text-[14px] leading-[20px] italic">Graphic Editor</div>
        </div>
        <time className={clsx(mono, 'flex-1 pt-[2px] text-center text-[15px] leading-[15px] whitespace-nowrap italic')}>
          06 Jun 2022
          <br />
          09:39 PM
        </time>
      </div>
    </div>
  );
}

function PromptButton({ name, mint, children }: { name: string; mint?: boolean; children: ReactNode }) {
  return (
    <div className={clsx('flex border-r border-black p-px', mint ? 'bg-[#52cfb0]' : 'bg-[#ffffcb]')}>
      <button type="button" aria-label={name} className={clsx('m-px flex w-[27px] items-center justify-center border-2', creamBevel)}>
        <svg viewBox="0 0 20 20" className="size-5" fill="none" stroke="#000">
          {children}
        </svg>
      </button>
    </div>
  );
}

function PromptLine() {
  return (
    <div className={clsx(mono, 'flex h-[34px] border-t border-b border-black bg-[#ffffcb] text-[12px]')}>
      <PromptButton name="Snap off">
        <path d="M.5 .5 H19.500 V19.500 H.5 Z M4 8 V4 H8 M4 4 L15 15 M11 15 H15 V11" />
      </PromptButton>
      <PromptButton name="Snap angle">
        <path d="M.5 .5 H19.500 V19.500 H.5 Z M3 17 L17 3 M3 17 H9 M5 5 V8 H8 M11 12 V16 H14 V12 Z M15 12 L18 16" />
      </PromptButton>
      <PromptButton name="Snap grid" mint>
        <path d="M.5 .5 H19.500 V19.500 H.5 Z M5 3 H17 V17 H3 V6 Z M10 3 V17 M3 10 H17" />
      </PromptButton>
      <label htmlFor="xy" className="flex w-[47px] items-center border-r border-black pl-[2px] whitespace-pre">
        X Y :
      </label>
      <div className="relative flex p-[2px]">
        <input
          id="xy"
          type="text"
          className="w-[169px] border-2 border-t-[#9c9c78] border-r-[#cfcfa4] border-b-[#cfcfa4] border-l-[#9c9c78] bg-[#ffffcb] px-1 outline-none"
        />
        <span className="absolute top-[5px] left-[8px] h-[15px] border-l border-dotted border-black" />
      </div>
      <div className="flex border-l border-black">
        <PromptButton name="Alert" mint>
          <path d="M3.500 .5 H16.500 V19.500 H3.500 Z" />
          <path d="M10 4 V12 M10 14 V17" strokeWidth="2" />
        </PromptButton>
      </div>
      <output className="flex flex-1 items-center pl-[3px]">&lt;M1&gt; - Select first corner</output>
      <div className="relative flex w-20 border-l-2 border-black bg-[#52cfb0] py-[2px] pr-[3px] pl-1">
        <select
          aria-label="Units"
          className="w-full appearance-none border-2 border-t-[#a8eedb] border-r-[#35705f] border-b-[#35705f] border-l-[#a8eedb] bg-[#52cfb0] pl-[5px] text-[15px]"
        >
          <option>Inch</option>
          <option>MM</option>
        </select>
        <span className="pointer-events-none absolute top-[12px] right-[10px] h-[8px] w-[13px] border-2 border-t-[#a8eedb] border-r-[#35705f] border-b-[#35705f] border-l-[#a8eedb]" />
      </div>
    </div>
  );
}

function LanguageBar() {
  return (
    <div className="absolute right-[98px] bottom-[7px] flex h-[26px] w-[79px] items-center justify-between border-t border-[#555] bg-linear-to-b from-[#969a9a] to-[#4a5454] px-1">
      <svg viewBox="0 0 8 18" className="h-[18px] w-2">
        <path d="M1 0 V18 M4 0 V18 M7 0 V18" stroke="#222" strokeDasharray="2 2" />
      </svg>
      <svg viewBox="0 0 14 12" className="h-3 w-[14px]">
        <path d="M2 3 Q8 -1 12 2" fill="none" stroke="#888" />
        <rect x=".5" y="4.500" width="13" height="7" fill="#777" stroke="#ddd" />
        <path d="M2 6.500 H12 M2 8.500 H12 M4 10.500 H10" stroke="#eee" strokeDasharray="1 1" />
      </svg>
      <svg viewBox="0 0 16 16" className="size-4">
        <circle cx="8" cy="8" r="7" fill="#1018b8" stroke="#c8d0ff" />
        <path d="M5.500 6.500 Q5.500 4 8 4 Q10.500 4 10.500 6.500 Q10 8 8 8.500 V10 M8 11 V13" fill="none" stroke="#fff" strokeWidth="2" />
      </svg>
      <svg viewBox="0 0 6 14" className="mr-px h-[14px] w-[6px]">
        <path d="M0 2 H6 V4 H0 Z M0 10 H6 L3 13 Z" fill="#fff" />
      </svg>
    </div>
  );
}

function StatusLine() {
  return (
    <div className="relative h-[32px] border-2 border-t-[#6b8f90] border-r-[#d8ffff] border-b-[#d8ffff] border-l-[#6b8f90] bg-black p-px">
      <output
        className={clsx(
          mono,
          'flex h-full items-center justify-center border-2 border-t-[#dcffff] border-r-[#5f9a9c] border-b-[#5f9a9c] border-l-[#dcffff] bg-[#b2ffff] text-[12px]',
        )}
      >
        cs,#4925,Pad(.smd,.bga),X=4.44578,Y=3.9167799,r12.3,POS
      </output>
      <LanguageBar />
    </div>
  );
}

const snail = (
  <>
    <path d="M3 4 H12 L15 6 V10 H19 L15 13 H8 L2 9 Z" fill="#2cc0b4" />
    <path d="M3 13 H9 V22 H5 Z" fill="#24204c" />
    <path d="M8 15 Q11 10 20 11 Q31 11 31 19 Q30 27 20 28 Q9 28 8 15 Z" fill="#0c8c88" />
    <ellipse cx="20" cy="18" rx="8" ry="5" fill="#103c50" stroke="#44f0d8" strokeWidth="2.500" />
    <ellipse cx="21" cy="18" rx="3.500" ry="2.500" fill="#e8e040" stroke="#1c2c60" />
    <path d="M7 22 Q11 24 13 28 M23 28 L30 25" fill="none" stroke="#e8f0a0" strokeWidth="2" />
    <path d="M5 24 Q14 31 28 28" fill="none" stroke="#8c98a8" strokeWidth="1.500" />
  </>
);

const apps: { name: string; stacked?: boolean; active?: boolean; icon: ReactNode }[] = [
  {
    name: 'Shell',
    icon: (
      <>
        <path d="M11 29 Q7 28 6 25 L2 20 Q1 16 3 14 Q3 9 7 8 Q9 4 13 4 Q16 1 20 4 Q25 4 26 8 Q30 10 31 14 Q33 17 31 21 L27 26 Q25 30 21 29 Z" fill="#f8d890" />
        <path d="M15 29 L3 15 M15 29 L7 8 M15 29 L13 4 M16 29 L20 4 M17 29 L26 8 M18 29 L31 14" stroke="#d89c48" fill="none" />
        <path d="M21 11 L23.500 17 L31 17 L26 21.500 L29 28 L22 25 L15 29 L17 22 L12 18 L19 17 Z" fill="#f08a24" stroke="#b85a10" />
        <path d="M21.500 14 V21 L28 18.500 M21.500 21 L26 26 M21.500 21 L17 26 M21.500 21 L15 19" fill="none" stroke="#fcd080" strokeDasharray="1 1" />
      </>
    ),
  },
  {
    name: 'Notes',
    icon: (
      <>
        <rect x="5" y="3" width="24" height="27" rx="1" fill="#f4fafd" />
        <path d="M7 6.500 H27 M7 10.500 H27 M7 14.500 H27 M7 18.500 H27 M7 22.500 H27 M7 26.500 H27" stroke="#2c94c4" strokeWidth="1.500" />
      </>
    ),
  },
  {
    name: 'Total Commander',
    icon: (
      <>
        <path d="M2 1 H29 L32 4 V31 H2 Z" fill="#1c3cc8" />
        <rect x="9" y="1" width="16" height="10" fill="#c4ccd8" />
        <rect x="18" y="2" width="4" height="8" fill="#1c3cc8" />
        <rect x="5" y="14" width="24" height="17" fill="#fff" />
        <path d="M7 17.500 H27 M7 21.500 H27 M7 25.500 H15" stroke="#c03030" />
        <path d="M17 25.500 H19 M20 23 V28 H23 V25.500 H20 M24.500 23 V26 H27 V29 M28 26 H30" stroke="#222" fill="none" />
      </>
    ),
  },
  {
    name: 'Genesis',
    icon: (
      <path
        d="M30 2 L28 7 L18 9 L11 17 L10 22 L13 26 L21 25 L23 20 H15 L18 15 H29 L26 26 L21 31 H8 L3 26 L4 15 L11 6 L15 4 L25 4 L27 2 Z"
        fill="#e02c18"
        stroke="#8c1008"
      />
    ),
  },
  {
    name: 'Plotter',
    icon: (
      <>
        <path d="M12 10 Q18 6 25 9 Q31 12 31 18 Q29 25 21 25 L18 23 V29 L20 31 H10 V21 L12 20 Z" fill="#0f8c44" />
        <path d="M3 30 L7 22 V3 H26 L25 6" fill="none" stroke="#0f8c44" strokeWidth="1.500" />
        <path d="M10 23.500 H18 M10 26.500 H18 M10 29.500 H18" stroke="#33435c" strokeWidth=".8" />
      </>
    ),
  },
  {
    name: 'Excel',
    stacked: true,
    icon: (
      <>
        <path d="M3 26 V8 L10 2 H25 V26 Z" fill="#b8dc9c" stroke="#e8f4e0" />
        <path d="M13 10 L32 12 L30 31 L12 28 Z" fill="#fff" stroke="#4c8c34" />
        <path d="M22 15 H29 M21 20 H29 M15 25 H28" stroke="#5cac3c" strokeWidth="3" strokeDasharray="5 1" />
        <rect x="7" y="8" width="14" height="13" fill="#d4ecc4" />
        <path d="M9 10 L19 20 M18 9 L9 20" stroke="#1c6c1c" strokeWidth="3" />
      </>
    ),
  },
  {
    name: 'Word',
    icon: (
      <>
        <path d="M3 27 V9 L10 2 H25 V27 Z" fill="#b4ccf0" stroke="#e4ecfa" />
        <path d="M4 26 V14 L12 4 V20 Z" fill="#3868c0" />
        <path d="M13 5 L32 7 L30 30 L12 28 Z" fill="#fff" stroke="#88a4d4" />
        <path d="M12 9 L14.500 18 L17.500 11 L20 18 L23 10" stroke="#1c4ca4" strokeWidth="2.500" fill="none" />
        <path d="M24 11.500 H29 M24 14.500 H29 M23 17.500 H29 M15 21.500 H28 M15 24.500 H28" stroke="#4c78c0" strokeWidth="1.500" />
      </>
    ),
  },
  { name: 'Frontline 1', icon: snail },
  { name: 'Frontline 2', icon: snail },
  {
    name: 'X Server',
    active: true,
    stacked: true,
    icon: (
      <>
        <path d="M30 3 L18 15 M15 18 L4 31" stroke="#e8e8f0" strokeWidth="3" />
        <path d="M3 3 H10 L31 30 H24 Z" fill="#7c1080" stroke="#111" />
        <path d="M30 3 L18 15 M15 18 L4 31" stroke="#111" strokeWidth="1.500" />
      </>
    ),
  },
  {
    name: 'Messenger',
    icon: (
      <>
        <circle cx="16" cy="16" r="15" fill="#2c8cf4" />
        <path d="M7 7 Q12 12 26 13 L21 19 H23 L13 28 L15 21 H12 L14 19 Q9 17 9 15 L12 15 Q7 11 7 7 Z" fill="#fff" />
      </>
    ),
  },
];

function Taskbar() {
  return (
    <footer className="flex h-10 items-stretch border-t border-[#5a6a7c] bg-[linear-gradient(90deg,#1b2b40_0,#24344c_30%,#2a4060_60%,#22364f_85%,#1a2536_100%)] pl-2">
      <button type="button" aria-label="Start" className="flex w-[52px] items-center">
        <svg viewBox="0 0 38 38" className="size-[37px]">
          <defs>
            <radialGradient id="orb" cx=".5" cy=".9" r=".9">
              <stop offset="0" stopColor="#4cc8e8" />
              <stop offset=".5" stopColor="#1c5c94" />
              <stop offset="1" stopColor="#8ca8c4" />
            </radialGradient>
          </defs>
          <circle cx="19" cy="19" r="18" fill="url(#orb)" stroke="#0c2c50" />
          <path d="M10 10 Q14 7 19 10 L17 18 Q12 15 8 18 Z" fill="#e85c24" />
          <path d="M20 11 Q25 14 30 11 L28 19 Q23 22 18 18 Z" fill="#7cc444" />
          <path d="M7 20 Q12 17 16 20 L14 28 Q10 25 5 27 Z" fill="#3c9ce0" />
          <path d="M18 20 Q22 23 27 21 L25 29 Q20 31 16 28 Z" fill="#f8c828" />
        </svg>
      </button>
      <div className="flex gap-1">
        {apps.map((app) => (
          <div key={app.name} className="flex w-[58px]">
            <button
              type="button"
              aria-label={app.name}
              className={clsx(
                'flex flex-1 items-center justify-center rounded-sm border',
                app.active
                  ? 'border-[#c8ccd4] bg-linear-to-b from-[#a8aebb] to-[#767f90]'
                  : 'border-[#75849a] bg-linear-to-br from-[#7c8798] via-[#4a586e] via-40% to-[#33435c]',
              )}
            >
              <svg viewBox="0 0 34 34" className="size-[33px]">
                {app.icon}
              </svg>
            </button>
            {app.stacked && <span className="w-[4px] rounded-r-sm border border-l-0 border-[#75849a] bg-[#3f4d63]" />}
            {app.stacked && <span className="w-[4px] rounded-r-sm border border-l-0 border-[#75849a] bg-[#3f4d63]" />}
          </div>
        ))}
      </div>
      <div className="ml-auto flex items-center">
        <svg viewBox="0 0 84 20" className="h-5 w-[84px]">
          <path d="M1 12 L5 8 L9 12 Z" fill="#fff" />
          <path d="M22.500 3 V18" stroke="#fff" strokeWidth="1.500" />
          <path d="M24 4 H29 L31 6 H35 V12 H30 L28 10 H24 Z" fill="#fff" />
          <circle cx="31" cy="13" r="4.500" fill="#e02818" stroke="#f0c0b8" strokeWidth=".5" />
          <path d="M29 11 L33 15 M33 11 L29 15" stroke="#fff" strokeWidth="1.500" />
          <path d="M46 7 H49 L53 3 V17 L49 13 H46 Z" fill="#fff" />
          <path d="M55 7 Q57 10 55 13 M57 5 Q60 10 57 15" stroke="#c8d0d8" fill="none" />
          <path d="M73 6 H83 V14 H73 Z M75 17 H82 M78 14 V17 M70 4 H75 V7 M72.500 7 V16 H76 M71 2 V4 M74 2 V4" fill="none" stroke="#fff" strokeWidth="1.500" />
        </svg>
        <time className="mr-[12px] ml-[20px] text-center font-['Noto_Sans',sans-serif] text-[12px] leading-[17px] text-white">
          21:47
          <br />
          2022/6/6
        </time>
        <button type="button" aria-label="Show desktop" className="mr-[2px] h-full w-[13px] border border-[#7c8898] bg-linear-to-b from-[#7c8490] to-[#2c3848]" />
      </div>
    </footer>
  );
}

export default function App() {
  return (
    <div className="flex min-h-screen flex-col bg-black text-black">
      <TitleBar />
      <MenuBar />
      <div className="flex flex-1">
        <LayerSidebar />
        <main className="relative min-w-0 flex-1 overflow-hidden bg-black">
          <Canvas />
          <PopView />
        </main>
        <ToolSidebar />
      </div>
      <PromptLine />
      <StatusLine />
      <Taskbar />
    </div>
  );
}
